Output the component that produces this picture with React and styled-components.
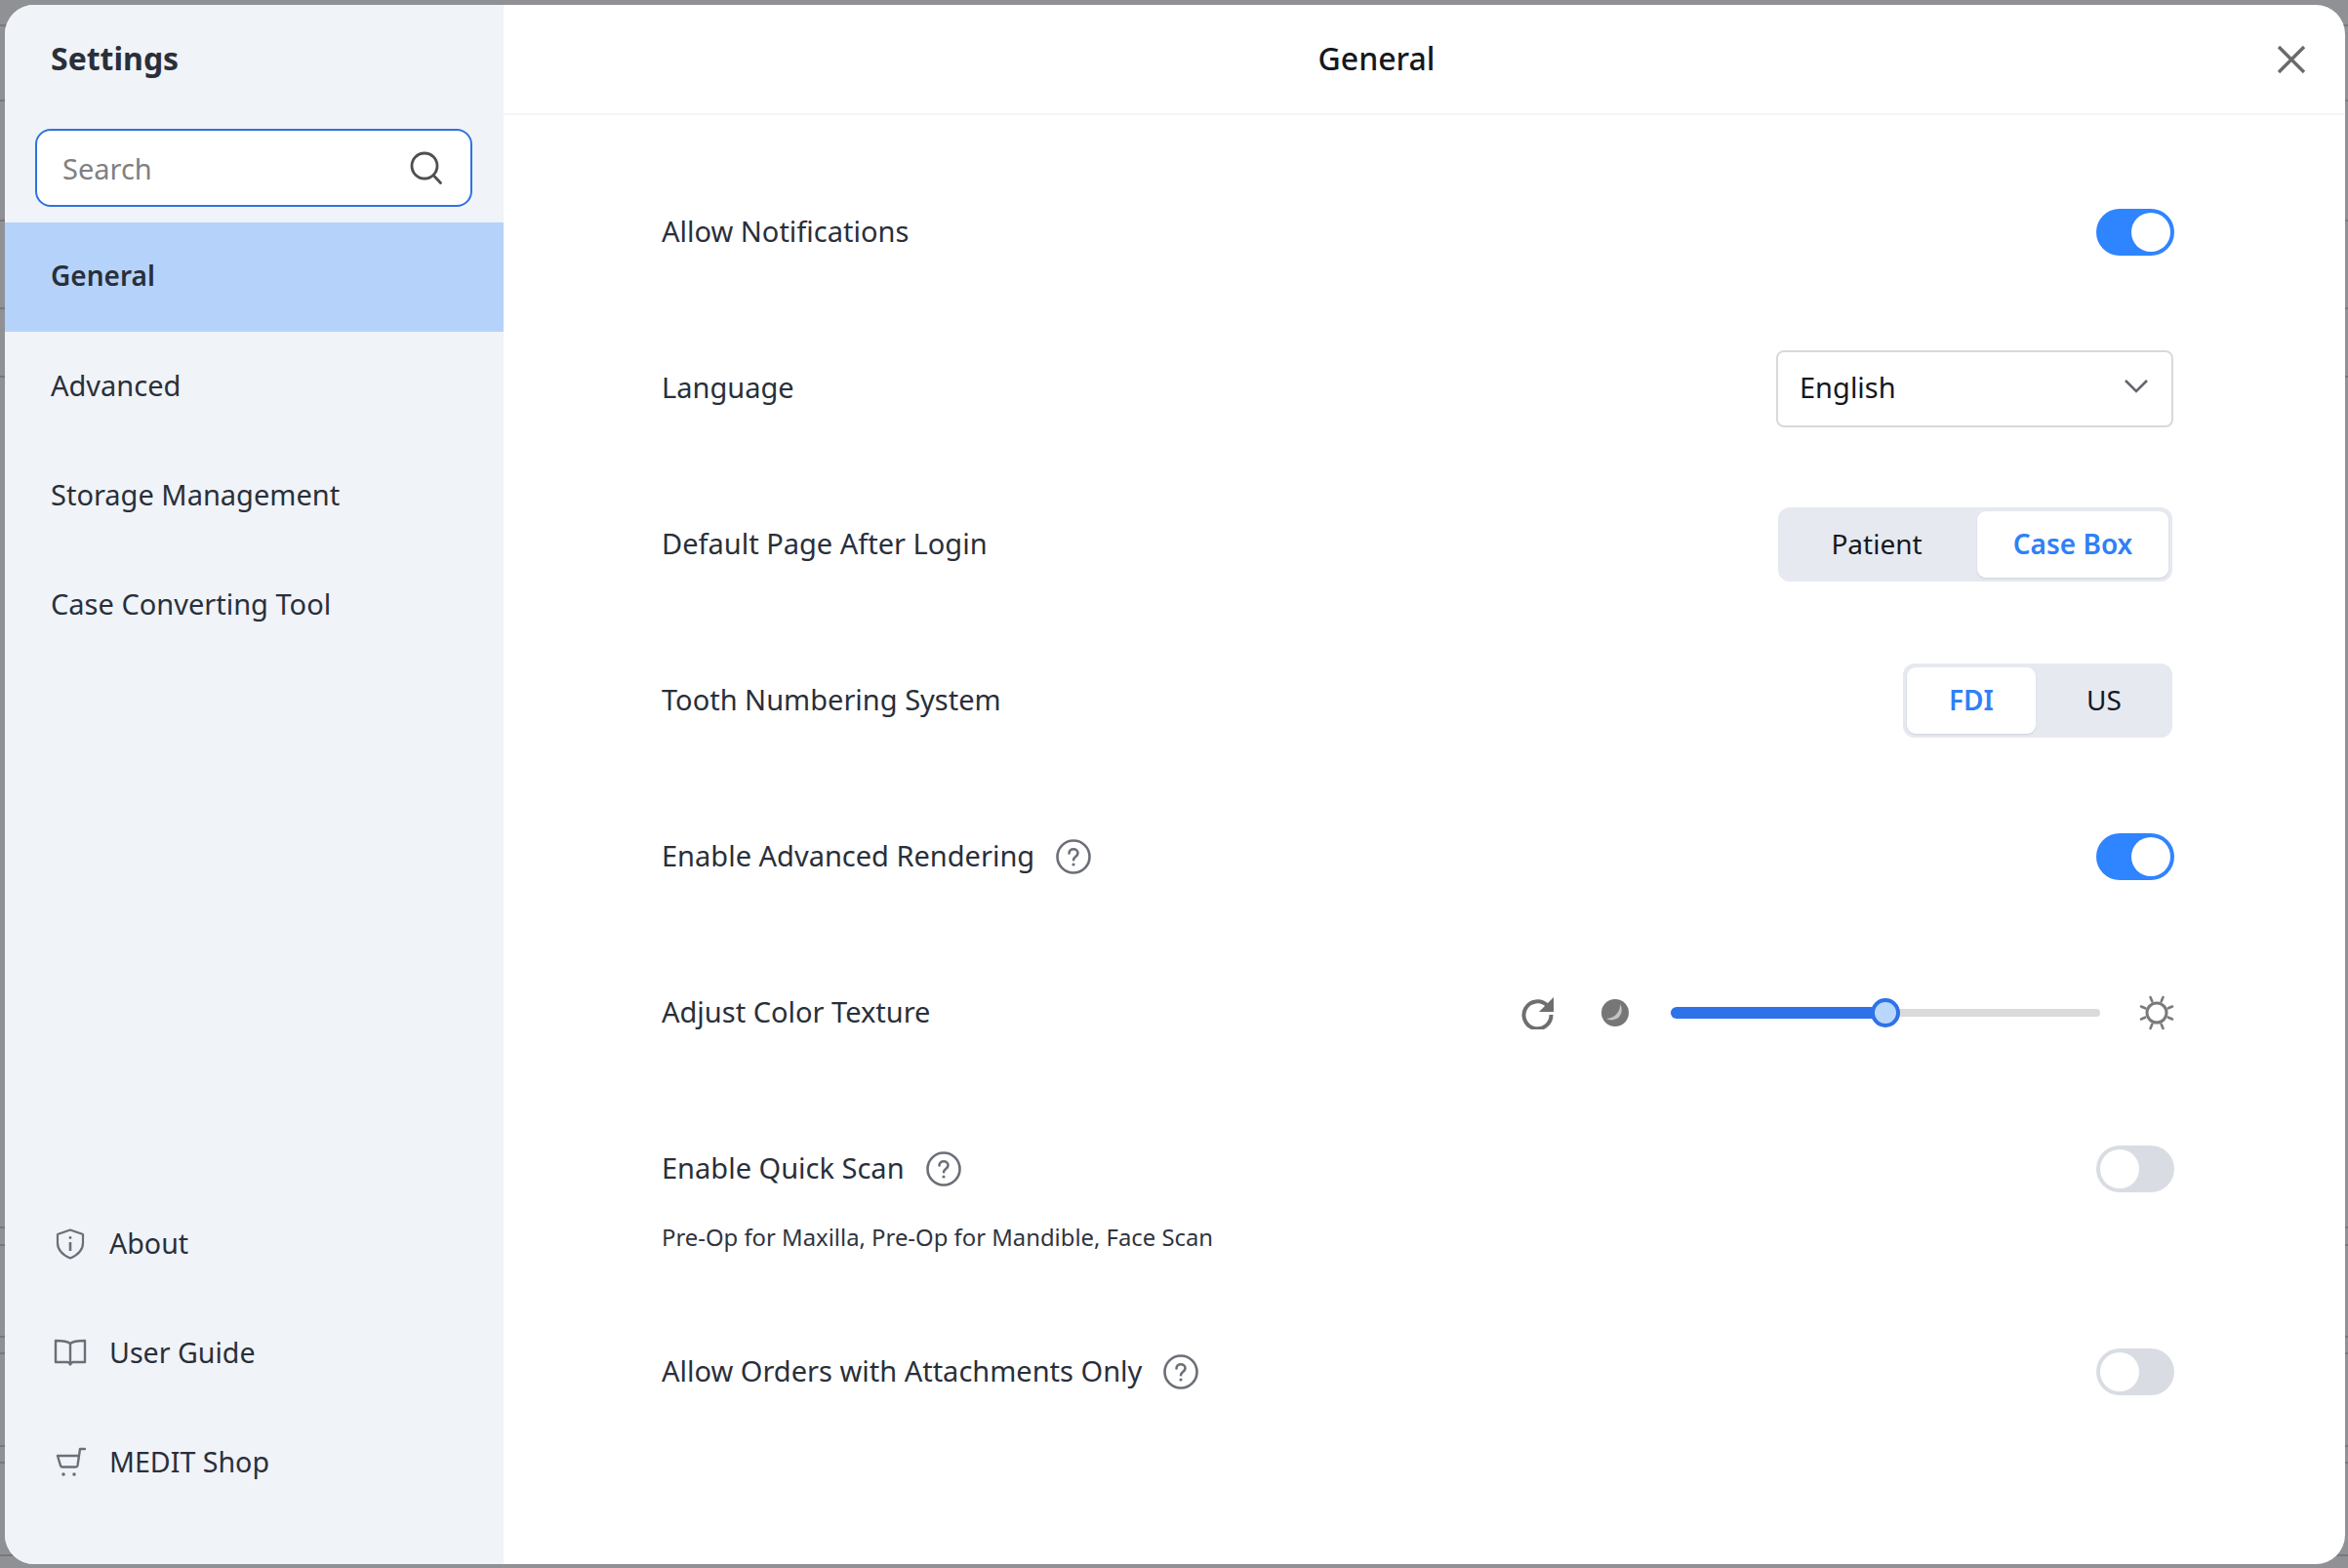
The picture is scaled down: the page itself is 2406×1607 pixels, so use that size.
import React from 'react';
import styled, { createGlobalStyle } from 'styled-components';

// faint table lines of the page behind the dialog, they only show in the margins
const backdropLines = [25, 102, 225, 315, 385, 1257, 1275, 1369, 1386, 1481, 1498, 1593];
const lineStops = backdropLines
  .map(y => `transparent ${y}px, #76787b ${y}px, #76787b ${y + 2}px, transparent ${y + 2}px`)
  .join(', ');

const GlobalStyle = createGlobalStyle`
  html, body {
    margin: 0;
    padding: 0;
    height: 100%;
  }
  body {
    background: #8f9194;
    font-family: "Noto Sans", "Open Sans", sans-serif;
    overflow: hidden;
  }
`;

const Backdrop = styled.div`
  box-sizing: border-box;
  width: 2406px;
  height: 1607px;
  padding: 5px 3px 4px 5px;
  background: linear-gradient(to bottom, ${lineStops});
`;

const Modal = styled.div`
  display: flex;
  height: 100%;
  border-radius: 30px;
  overflow: hidden;
  background: #fff;
`;

const Sidebar = styled.aside`
  display: flex;
  flex-direction: column;
  flex: 0 0 511px;
  padding-bottom: 48px;
  box-sizing: border-box;
  background: #f0f3f8;
  color: #2a2f3a;
`;

const SidebarTitle = styled.h1`
  margin: 0;
  padding: 0 47px;
  height: 111px;
  line-height: 110px;
  font-size: 32px;
  font-weight: 700;
`;

const SearchBox = styled.div`
  display: flex;
  align-items: center;
  justify-content: space-between;
  box-sizing: border-box;
  height: 80px;
  margin: 16px 32px 16px 31px;
  padding: 0 28px 0 26px;
  border: 2px solid #2f72e0;
  border-radius: 16px;
  background: #fff;
  color: #808080;
  font-size: 29px;
`;

const Nav = styled.nav`
  display: flex;
  flex-direction: column;
`;

const BottomNav = styled(Nav)`
  margin-top: auto;
`;

const NavItem = styled.div`
  display: flex;
  align-items: center;
  box-sizing: border-box;
  height: 112px;
  padding: 0 0 4px 47px;
  font-size: ${p => (p.$active ? '28px' : '29px')};
  font-weight: ${p => (p.$active ? 600 : 400)};
  background: ${p => (p.$active ? '#b5d3fa' : 'transparent')};
`;

const IconLink = styled(NavItem)`
  gap: 23px;
  padding-left: 50px;
  padding-bottom: 0;
  font-size: 28.6px;
`;

const IconSlot = styled.span`
  display: flex;
  justify-content: center;
  width: 34px;
`;

const IconLinkText = styled.span`
  padding-bottom: 4px;
`;

const Main = styled.main`
  flex: 1;
  display: flex;
  flex-direction: column;
  min-width: 0;
`;

const Header = styled.header`
  display: flex;
  align-items: center;
  box-sizing: border-box;
  flex: 0 0 113px;
  padding-right: 12px;
  border-bottom: 2px solid #f4f5f7;
`;

const HeaderTitle = styled.h2`
  flex: 1;
  margin: 0;
  padding-bottom: 3px;
  text-align: center;
  font-size: 32px;
  font-weight: 500;
  color: #15181e;
`;

const CloseButton = styled.button`
  display: flex;
  align-items: center;
  justify-content: center;
  width: 86px;
  height: 60px;
  padding: 0;
  border: 0;
  background: none;
`;

const Content = styled.section`
  display: flex;
  flex-direction: column;
  gap: 112px;
  padding: 96px 175px 0 162px;
`;

const Row = styled.div`
  display: flex;
  align-items: center;
  justify-content: space-between;
  height: 48px;
`;

const LabelWrap = styled.div`
  display: flex;
  align-items: center;
  gap: 22px;
`;

const Label = styled.span`
  padding-bottom: 4px;
  font-size: 29px;
  color: #2a2f3a;
`;

const SubText = styled.p`
  margin: 26px 0 -18px;
  line-height: 40px;
  font-size: 23.85px;
  color: #2f343e;
`;

const Toggle = styled.div`
  display: flex;
  justify-content: ${p => (p.$on ? 'flex-end' : 'flex-start')};
  box-sizing: border-box;
  width: 80px;
  height: 48px;
  padding: 4px;
  border-radius: 24px;
  background: ${p => (p.$on ? '#2f84ff' : '#d9dde3')};
`;

const Knob = styled.span`
  width: 40px;
  height: 40px;
  border-radius: 50%;
  background: #fff;
`;

const Select = styled.div`
  display: flex;
  align-items: center;
  justify-content: space-between;
  box-sizing: border-box;
  width: 407px;
  height: 79px;
  margin-right: 1px;
  padding: 0 23px 4px 22px;
  border: 2px solid #d9d9dc;
  border-radius: 8px;
  font-size: 29px;
  color: #15181e;
`;

const Segments = styled.div`
  display: flex;
  margin-right: 2px;
  padding: 4px;
  height: 76px;
  box-sizing: border-box;
  border-radius: 12px;
  background: #e6e9f0;
`;

const Segment = styled.div`
  display: flex;
  align-items: center;
  justify-content: center;
  padding: ${p => p.$padding || '0 0 3px'};
  box-sizing: border-box;
  width: ${p => p.$width}px;
  border-radius: 9px;
  font-size: 28px;
  font-weight: ${p => (p.$active ? 600 : 400)};
  color: ${p => (p.$active ? '#2f80f7' : '#15181e')};
  background: ${p => (p.$active ? '#fff' : 'transparent')};
  box-shadow: ${p => (p.$active ? '0 1px 2px rgba(40, 50, 70, 0.12)' : 'none')};
`;

const ColorControls = styled.div`
  display: flex;
  align-items: center;
  gap: 48px;
`;

const Slider = styled.div`
  display: flex;
  align-items: center;
  gap: 40px;
`;

const Track = styled.div`
  position: relative;
  width: 440px;
  height: 8px;
  margin-left: 3px;
  border-radius: 4px;
  background: #dadada;
`;

const TrackFill = styled.div`
  position: absolute;
  left: 0;
  top: -2px;
  height: 12px;
  border-radius: 6px;
  background: #2d72e8;
`;

const Thumb = styled.div`
  position: absolute;
  top: -11px;
  box-sizing: border-box;
  width: 30px;
  height: 30px;
  margin-left: -15px;
  border: 4px solid #2d72e8;
  border-radius: 50%;
  background: #b9d7fb;
`;

const Search = () => (
  <svg width="36" height="36" viewBox="0 0 36 36" fill="none" stroke="#4f4f4f" strokeWidth="2.8" strokeLinecap="round">
    <circle cx="17" cy="16" r="13" />
    <path d="M26.500 26l7 7.500" />
  </svg>
);

const Shield = () => (
  <svg width="30" height="32" viewBox="0 0 30 32" fill="none" stroke="#6b6f78" strokeWidth="2.2" strokeLinejoin="round">
    <path d="M15 1.500l13 4.500v9c0 7-5 12-13 15.500C7 27 2 22 2 15V6z" />
    <path d="M15 14v9" strokeWidth="2.600" />
    <circle cx="15" cy="9.500" r="1.400" fill="#6b6f78" stroke="none" />
  </svg>
);

const Book = () => (
  <svg width="34" height="30" viewBox="0 0 34 30" fill="none" stroke="#6b6f78" strokeWidth="2.4" strokeLinejoin="round">
    <path d="M17 5C14 2.500 10 2 2 2v22h12c1.500 0 2.500.800 3 2.500.500-1.700 1.500-2.500 3-2.500h12V2c-8 0-12 .500-15 3z" />
    <path d="M17 5v22" />
  </svg>
);

const Cart = () => (
  <svg width="32" height="32" viewBox="0 0 32 32" fill="none" stroke="#6b6f78" strokeWidth="2.4" strokeLinecap="round" strokeLinejoin="round">
    <path d="M31 2h-5l-2.500 17c-.200 1-.800 1.500-2 1.500H8c-1 0-1.700-.600-2-1.500L3 9h21.500" />
    <circle cx="9" cy="28" r="1.800" fill="#6b6f78" stroke="none" />
    <circle cx="20" cy="28" r="1.800" fill="#6b6f78" stroke="none" />
  </svg>
);

const Close = () => (
  <svg width="30" height="30" viewBox="0 0 30 30" stroke="#6b6b6b" strokeWidth="3.4">
    <path d="M2 2l26 26M28 2L2 28" />
  </svg>
);

const Chevron = () => (
  <svg width="26" height="16" viewBox="0 0 26 16" fill="none" stroke="#63666e" strokeWidth="2.6">
    <path d="M2 2l11 11L24 2" />
  </svg>
);

const Help = () => (
  <svg width="36" height="36" viewBox="0 0 36 36" fill="none" stroke="#6b6f78" strokeWidth="2.6" strokeLinecap="round">
    <circle cx="18" cy="18" r="16.500" />
    <path d="M13.500 14.500c0-2.600 2-4.200 4.500-4.200s4.500 1.600 4.500 4c0 3.800-4.500 3.600-4.500 7" />
    <circle cx="18" cy="26" r="1.600" fill="#6b6f78" stroke="none" />
  </svg>
);

const Reset = () => (
  <svg width="34" height="34" viewBox="0 0 34 34" fill="none">
    <path d="M26.500 9.500A14 14 0 1 0 30.500 19" stroke="#6e6e6e" strokeWidth="4" />
    <path d="M33 1v15H18z" fill="#6e6e6e" />
  </svg>
);

const Moon = () => (
  <svg width="28" height="28" viewBox="0 0 28 28">
    <circle cx="14" cy="14" r="14" fill="#767676" />
    <path d="M19 5A10.500 10.500 0 0 1 5 20A14 14 0 0 0 19 5Z" fill="#c4c4c4" />
  </svg>
);

const Sun = () => (
  <svg width="36" height="36" viewBox="0 0 36 36" fill="none" stroke="#7a7a7a" strokeLinecap="round">
    <circle cx="18" cy="18" r="10" strokeWidth="3" />
    <path
      strokeWidth="2.600"
      d="M11.500 2l1.800 4.200M24.500 2l-1.800 4.200M34 11.500l-4.200 1.800M34 24.500l-4.200-1.800M24.500 34l-1.800-4.200M11.500 34l1.800-4.200M2 24.500l4.200-1.800M2 11.500l4.200 1.800"
    />
  </svg>
);

const SettingRow = ({ label, help, children }) => (
  <Row>
    <LabelWrap>
      <Label>{label}</Label>
      {help && <Help />}
    </LabelWrap>
    {children}
  </Row>
);

const Switch = ({ on }) => (
  <Toggle $on={on}>
    <Knob />
  </Toggle>
);

const SideLink = ({ icon, children }) => (
  <IconLink>
    <IconSlot>{icon}</IconSlot>
    <IconLinkText>{children}</IconLinkText>
  </IconLink>
);

export default function App() {
  const level = 50;

  return (
    <Backdrop>
      <GlobalStyle />
      <Modal>
        <Sidebar>
          <SidebarTitle>Settings</SidebarTitle>
          <SearchBox>
            Search
            <Search />
          </SearchBox>
          <Nav>
            <NavItem $active>General</NavItem>
            <NavItem>Advanced</NavItem>
            <NavItem>Storage Management</NavItem>
            <NavItem>Case Converting Tool</NavItem>
          </Nav>
          <BottomNav>
            <SideLink icon={<Shield />}>About</SideLink>
            <SideLink icon={<Book />}>User Guide</SideLink>
            <SideLink icon={<Cart />}>MEDIT Shop</SideLink>
          </BottomNav>
        </Sidebar>

        <Main>
          <Header>
            <HeaderTitle>General</HeaderTitle>
            <CloseButton><Close /></CloseButton>
          </Header>
          <Content>
            <SettingRow label="Allow Notifications"><Switch on /></SettingRow>
            <SettingRow label="Language">
              <Select>English<Chevron /></Select>
            </SettingRow>
            <SettingRow label="Default Page After Login">
              <Segments>
                <Segment $width={200} $padding="0 6px 3px 0">Patient</Segment>
                <Segment $width={196} $active>Case Box</Segment>
              </Segments>
            </SettingRow>
            <SettingRow label="Tooth Numbering System">
              <Segments>
                <Segment $width={132} $active>FDI</Segment>
                <Segment $width={136} $padding="0 0 3px 4px">US</Segment>
              </Segments>
            </SettingRow>
            <SettingRow label="Enable Advanced Rendering" help><Switch on /></SettingRow>
            <SettingRow label="Adjust Color Texture">
              <ColorControls>
                <Reset />
                <Slider>
                  <Moon />
                  <Track>
                    <TrackFill style={{ width: `${level}%` }} />
                    <Thumb style={{ left: `${level}%` }} />
                  </Track>
                  <Sun />
                </Slider>
              </ColorControls>
            </SettingRow>
            <div>
              <SettingRow label="Enable Quick Scan" help><Switch /></SettingRow>
              <SubText>Pre-Op for Maxilla, Pre-Op for Mandible, Face Scan</SubText>
            </div>
            <SettingRow label="Allow Orders with Attachments Only" help><Switch /></SettingRow>
          </Content>
        </Main>
      </Modal>
    </Backdrop>
  );
}
